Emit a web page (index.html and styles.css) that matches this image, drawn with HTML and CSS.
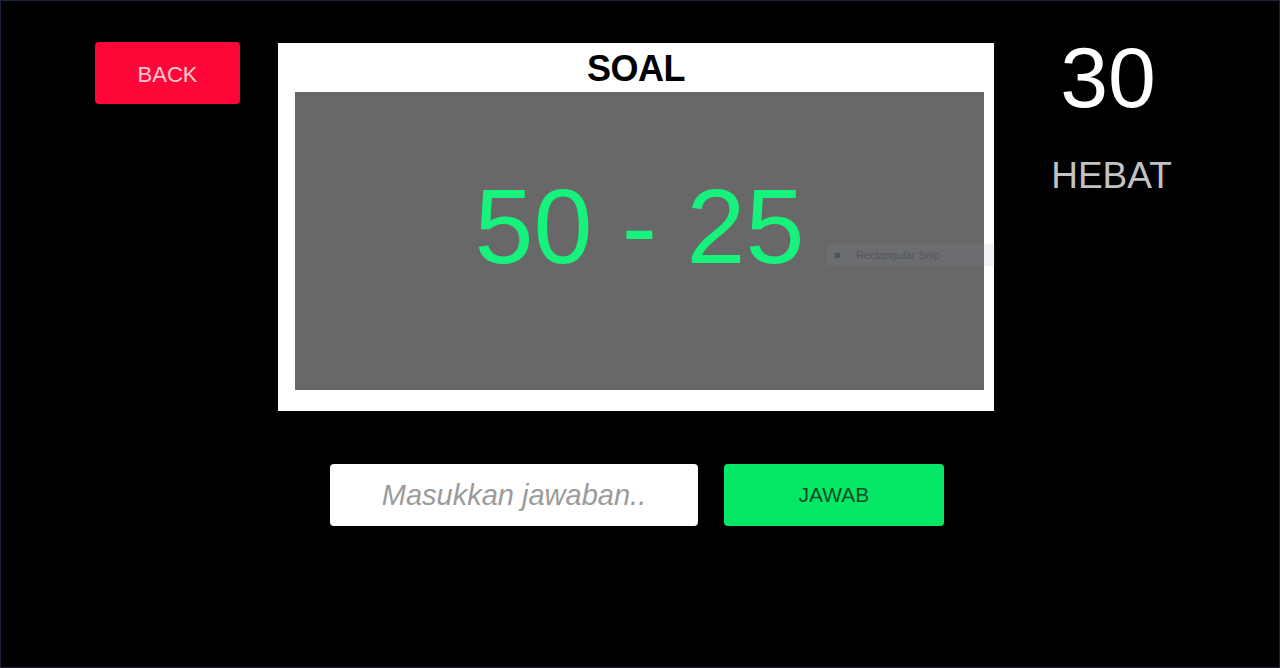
FILE: index.html
```html
<!DOCTYPE html>
<html lang="id">
<head>
    <meta charset="UTF-8">
    <meta name="viewport" content="width=device-width, initial-scale=1.0">
    <title>Kuis Matematika</title>
    <link rel="stylesheet" href="styles.css">
</head>
<body>

<div class="screen">
    <div class="top">
        <button class="btn-back">BACK</button>

        <div class="card">
            <div class="card-title">SOAL</div>
            <div class="question">
                <span class="question-text">50 - 25</span>
                <!-- leftover snip tooltip floating over the panel -->
                <div class="snip-tip">
                    <span class="snip-icon"></span>
                    <span>Rectangular Snip</span>
                </div>
            </div>
        </div>

        <div class="score-box">
            <div class="score">30</div>
            <div class="feedback">HEBAT</div>
        </div>
    </div>

    <div class="answer-row">
        <input type="text" class="answer-input" placeholder="Masukkan jawaban..">
        <button class="btn-answer">JAWAB</button>
    </div>
</div>

</body>
</html>
```

FILE: styles.css
```css
body {
    margin: 0;
    padding: 0;
    background-color: #000;
    font-family: "Liberation Sans", Arial, sans-serif;
}
.screen {
    box-sizing: border-box;
    width: 1280px;
    height: 668px;
    border: 1px solid #1d2336;
    background-color: #000;
    overflow: hidden;
}
.top {
    display: flex;
    align-items: flex-start;
    padding: 36px 0 0 94px;
}
.btn-back {
    width: 145px;
    height: 62px;
    margin-top: 5px;
    padding: 3px 0 0;
    background-color: #fe0738;
    color: #ffc9d3;
    border: none;
    border-radius: 4px;
    font-family: inherit;
    font-size: 22px;
}
.card {
    width: 716px;
    height: 368px;
    box-sizing: border-box;
    margin: 6px 0 0 38px;
    padding: 3px 10px 21px 17px;
    background-color: #fff;
    display: flex;
    flex-direction: column;
}
.card-title {
    height: 46px;
    line-height: 46px;
    padding-right: 7px;
    text-align: center;
    font-size: 36px;
    font-weight: 700;
    letter-spacing: -0.5px;
    color: #000;
}
.question {
    position: relative;
    flex: 1;
    background-color: #686868;
    padding-top: 81px;
    text-align: center;
}
.question-text {
    display: block;
    font-size: 106px;
    line-height: 1;
    color: #16f27b;
}
.snip-tip {
    position: absolute;
    left: 532px;
    top: 152px;
    width: 168px;
    height: 22px;
    display: flex;
    align-items: center;
    gap: 16px;
    padding-left: 8px;
    box-sizing: border-box;
    background-color: rgba(130, 150, 170, 0.12);
    color: #575757;
    font-size: 11px;
}
.snip-icon {
    width: 5px;
    height: 5px;
    background-color: #4e5358;
}
.score-box {
    width: 228px;
    margin-top: -3px;
    text-align: center;
}
.score {
    font-size: 86px;
    line-height: 1;
    color: #fff;
}
.feedback {
    margin-top: 37px;
    padding-left: 7px;
    font-size: 37px;
    line-height: 1;
    color: #c2c2c2;
}
.answer-row {
    display: flex;
    justify-content: center;
    gap: 26px;
    margin-top: 53px;
    padding-right: 6px;
}
.answer-input {
    width: 368px;
    height: 62px;
    box-sizing: border-box;
    border: none;
    border-radius: 4px;
    background-color: #fff;
    font-family: inherit;
    font-size: 29px;
    font-style: italic;
    text-align: center;
    color: #333;
    outline: none;
}
.answer-input::placeholder {
    color: #9b9b9b;
}
.btn-answer {
    width: 220px;
    height: 62px;
    background-color: #05e767;
    color: #0a4e25;
    border: none;
    border-radius: 4px;
    font-family: inherit;
    font-size: 21px;
}
```
